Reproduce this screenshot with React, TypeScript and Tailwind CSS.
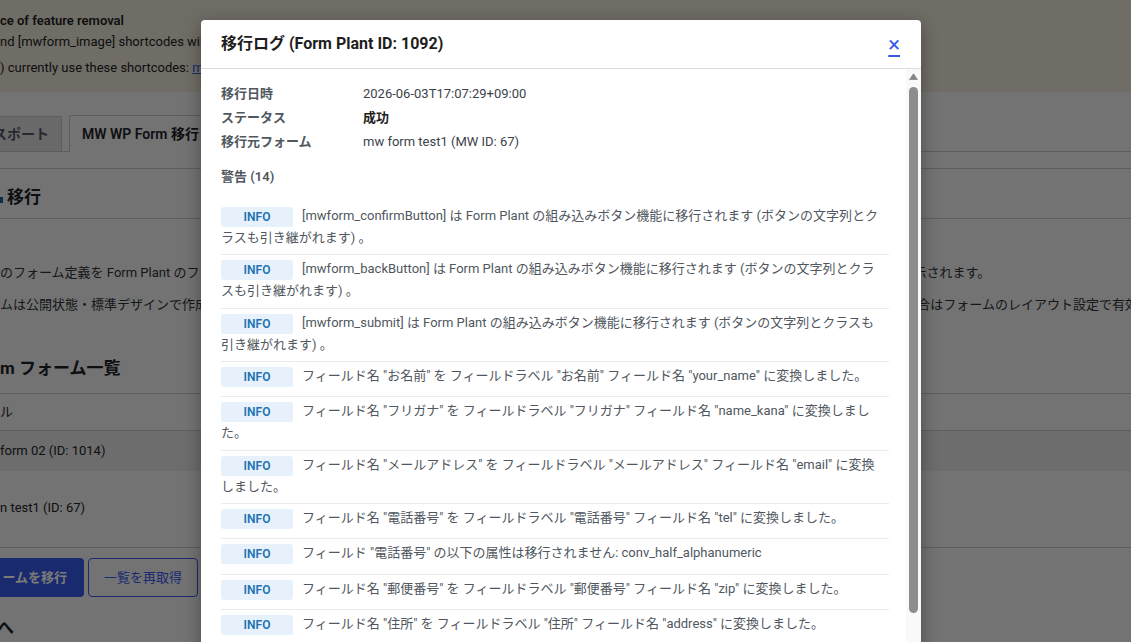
import React from "react";

const warnings: string[] = [
  "[mwform_confirmButton] は Form Plant の組み込みボタン機能に移行されます (ボタンの文字列とクラスも引き継がれます) 。",
  "[mwform_backButton] は Form Plant の組み込みボタン機能に移行されます (ボタンの文字列とクラスも引き継がれます) 。",
  "[mwform_submit] は Form Plant の組み込みボタン機能に移行されます (ボタンの文字列とクラスも引き継がれます) 。",
  'フィールド名 "お名前" を フィールドラベル "お名前" フィールド名 "your_name" に変換しました。',
  'フィールド名 "フリガナ" を フィールドラベル "フリガナ" フィールド名 "name_kana" に変換しました。',
  'フィールド名 "メールアドレス" を フィールドラベル "メールアドレス" フィールド名 "email" に変換しました。',
  'フィールド名 "電話番号" を フィールドラベル "電話番号" フィールド名 "tel" に変換しました。',
  'フィールド "電話番号" の以下の属性は移行されません: conv_half_alphanumeric',
  'フィールド名 "郵便番号" を フィールドラベル "郵便番号" フィールド名 "zip" に変換しました。',
  'フィールド名 "住所" を フィールドラベル "住所" フィールド名 "address" に変換しました。',
  'フィールド名 "お問い合わせ種別" を フィールドラベル "お問い合わせ種別" フィールド名 "category" に変換しました。',
  'フィールド名 "お問い合わせ内容" を フィールドラベル "お問い合わせ内容" フィールド名 "message" に変換しました。',
  'フィールド "お問い合わせ内容" の以下の属性は移行されません: max',
  'フィールド名 "同意" を フィールドラベル "同意" フィールド名 "agree" に変換しました。',
];

const details: { label: string; value: string; strong?: boolean }[] = [
  { label: "移行日時", value: "2026-06-03T17:07:29+09:00" },
  { label: "ステータス", value: "成功", strong: true },
  { label: "移行元フォーム", value: "mw form test1 (MW ID: 67)" },
];

function AdminPage() {
  return (
    <div className="text-[13px] text-[#1d2327]">
      {/* removal notice */}
      <div className="h-[92px] bg-[#ebe3d5] pt-[11px]">
        <p className="font-semibold leading-5">ce of feature removal</p>
        <p className="mt-[1px] leading-5">nd [mwform_image] shortcodes will be removed in a future version.</p>
        <p className="mt-[6px] leading-5">
          ) currently use these shortcodes: <a className="text-[#3858e9] underline">mw form test1</a>
        </p>
      </div>

      {/* tabs */}
      <div className="mt-[23px] flex h-[37px] items-end border-b border-[#c3c4c7]">
        <div className="flex h-[35px] w-[62px] items-center justify-end overflow-hidden whitespace-nowrap border border-b-0 border-l-0 border-[#c3c4c7] bg-[#dcdcde] pr-3 text-[14px] font-semibold text-[#50575e]">
          スポート
        </div>
        <div className="ml-[7px] -mb-px flex h-[37px] items-center whitespace-nowrap border border-b-0 border-[#c3c4c7] bg-[#f0f0f1] px-3 text-[14px] font-semibold">
          MW WP Form 移行
        </div>
      </div>

      <div className="mt-4 border-t border-[#c3c4c7]">
        <div className="flex h-[50px] items-center border-b border-[#c3c4c7] pt-[8px]">
          <span className="mr-[4px] mt-[4px] h-[6px] w-[3px] bg-[#1f5f8f]" />
          <h2 className="text-[17px] font-bold">移行</h2>
        </div>

        <div className="pt-[38px] leading-[32px] text-[#2c3338]">
          <p className="whitespace-nowrap">
            のフォーム定義を Form Plant のフォームとして複製します。移行元のフォームはそのまま残るため 移行後も内容を見られます。移行したフォームは一覧に表示されます。
          </p>
          <p className="whitespace-nowrap">
            ムは公開状態・標準デザインで作成されます。作成後は Form Plant の編集画面で項目や設定を確認してください。MW WP Form のデザインを引き継ぎたい場合はフォームのレイアウト設定で有効にしてください。
          </p>
        </div>

        <h2 className="mt-[35px] text-[17px] font-bold leading-6">m フォーム一覧</h2>

        <div className="mt-[13px] border-y border-[#c3c4c7]">
          <div className="flex h-[37px] items-center border-b border-[#c3c4c7]">ル</div>
          <div className="flex h-[40px] items-center bg-[#e4e4e6]">form 02 (ID: 1014)</div>
          <div className="flex h-[76px] items-center pb-[3px]">n test1 (ID: 67)</div>
        </div>

        <div className="mt-[10px] flex gap-1">
          <button className="h-[39px] w-[84px] rounded-r-sm bg-[#3858e9] pr-[17px] text-right text-[13px] font-semibold text-white">
            ームを移行
          </button>
          <button className="h-[39px] w-[110px] rounded-sm border border-[#3858e9] text-[13px] text-[#3858e9]">
            一覧を再取得
          </button>
        </div>

        <h2 className="mt-[19px] -ml-[3px] text-[17px] font-bold leading-6">へ</h2>
      </div>
    </div>
  );
}

// classic scrollbar strip beside the log list
function ScrollStrip() {
  return (
    <div className="flex w-[15px] shrink-0 flex-col bg-[#f9f9f9]">
      <div className="h-[15px] pl-[3px] pt-[4px]">
        <svg width="9" height="7" viewBox="0 0 9 7">
          <path d="M4.5 0.8 L8.4 6.5 H0.6 Z" fill="#858585" stroke="#858585" strokeWidth="0.8" strokeLinejoin="round" />
        </svg>
      </div>
      <div className="ml-[3px] mt-[3px] h-[526px] w-[9px] rounded-full bg-[#8d8d8d]" />
    </div>
  );
}

function LogDialog() {
  return (
    <div className="absolute left-[201px] top-[20px] w-[720px] rounded-[4px] bg-white shadow-[0_4px_18px_rgba(0,0,0,0.35)]">
      <div className="flex h-[49px] items-center justify-between border-b border-[#dcdcde] pl-5 pr-[21px]">
        <h1 className="text-[16px] font-bold text-[#1e1e1e]">移行ログ (Form Plant ID: 1092)</h1>
        <a className="mt-[2px] text-[22px] leading-[22px] text-[#3858e9] underline decoration-2 underline-offset-[3px]">
          ×
        </a>
      </div>

      <div className="flex h-[622px]">
        <div className="min-w-0 flex-1 overflow-hidden pl-5 pr-[17px] pt-[13px] pb-5 text-[13px]">
          <dl className="grid grid-cols-[142px_1fr] leading-6">
            {details.map((d) => (
              <React.Fragment key={d.label}>
                <dt className="font-semibold text-[#50575e]">{d.label}</dt>
                <dd className={d.strong ? "font-bold text-[#1e1e1e]" : "text-[#3c434a]"}>{d.value}</dd>
              </React.Fragment>
            ))}
          </dl>

          <h3 className="mt-[13px] font-semibold leading-5 text-[#50575e]">警告 ({warnings.length})</h3>

          <ul className="mt-[15px]">
            {warnings.map((w, i) => (
              <li key={i} className="border-b border-[#ebebeb] pt-[3px] pb-[7.35px] pr-[4px] leading-[18px] text-[#50575e] last:border-b-0">
                <span className="mr-[9px] my-[2px] inline-block h-5 w-[72px] rounded-[3px] bg-[#e6f1fc] text-center align-middle text-[12px] font-semibold leading-5 text-[#2271b1]">
                  INFO
                </span>
                {w}
              </li>
            ))}
          </ul>
        </div>
        <ScrollStrip />
      </div>
    </div>
  );
}

export default function App() {
  return (
    <div className="relative h-[642px] w-full overflow-hidden bg-[#f0f0f1] font-['Roboto','Noto_Sans_CJK_JP',sans-serif]">
      <AdminPage />
      <div className="absolute inset-0 bg-black/[0.52]" />
      <LogDialog />
    </div>
  );
}
